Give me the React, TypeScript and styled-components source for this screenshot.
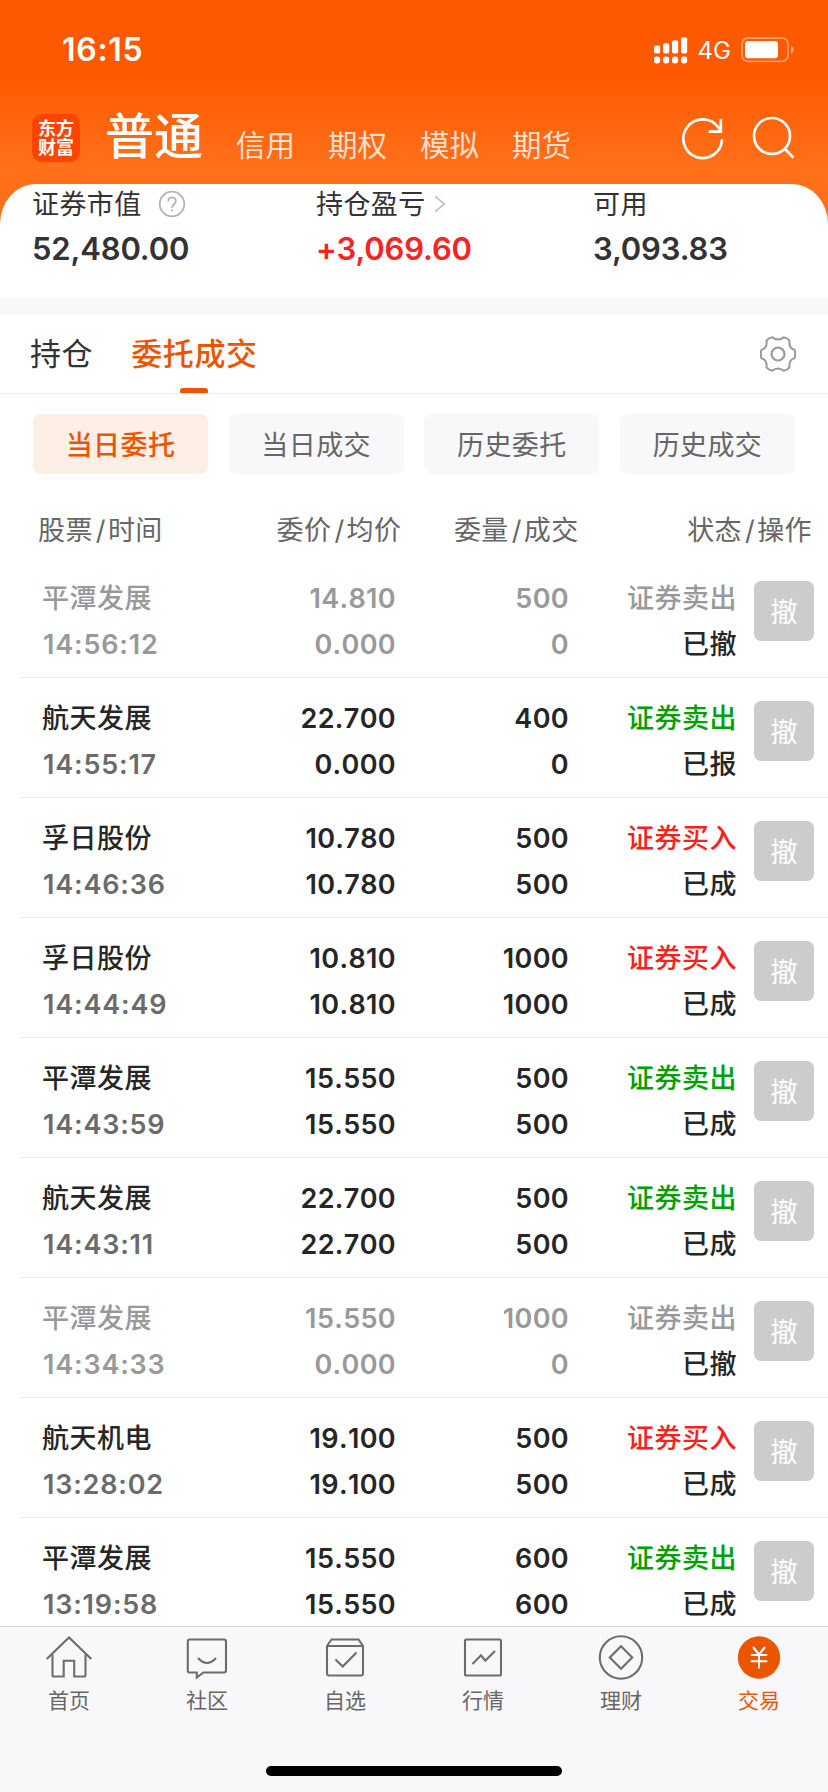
import React from 'react';
import styled, { createGlobalStyle } from 'styled-components';

const GlobalStyle = createGlobalStyle`
  * { box-sizing: border-box; }
  body {
    margin: 0;
    background: #fff;
    font-family: Inter, "Noto Sans CJK SC", sans-serif;
    color: #333;
  }
`;

const Screen = styled.div`
  width: 828px;
  height: 1792px;
  display: flex;
  flex-direction: column;
  overflow: hidden;
  background: linear-gradient(#ff5900 0, #ff5900 75px, #ff7019 165px, #ff7019 230px, #fff 230px);
`;

const StatusBar = styled.div`
  height: 100px;
  flex: none;
  display: flex;
  align-items: center;
  justify-content: space-between;
  padding: 0 34px 0 62px;
  color: #fff;
`;

const Clock = styled.div`
  font-size: 32px;
  line-height: 40px;
  font-weight: 600;
  letter-spacing: 0.7px;
`;

const StatusIcons = styled.div`
  display: flex;
  align-items: center;
`;

const Network = styled.span`
  margin: 0 10px 0 10px;
  font-size: 24px;
  line-height: 30px;
  font-weight: 400;
  padding-top: 2px;
`;

const NavBar = styled.div`
  height: 84px;
  flex: none;
  display: flex;
  padding: 0 33px 0 32px;
  color: #fff;
`;

const Logo = styled.div`
  width: 48px;
  height: 48px;
  margin-top: 14px;
  padding: 5px 0 0;
  border-radius: 10px;
  background: #ff4400;
  font-size: 18px;
  line-height: 19px;
  font-weight: 700;
  text-align: center;
`;

const MainMode = styled.div`
  margin: 7px 0 0 25px;
  font-size: 49px;
  line-height: 60px;
  font-weight: 500;
  width: 105px;
`;

const Mode = styled.div`
  width: 92px;
  margin-top: 25px;
  font-size: 29.5px;
  line-height: 40px;
  color: #ffdfcf;
`;

const ModeList = styled.div`
  display: flex;
  padding-left: 26px;
`;

const NavActions = styled.div`
  margin-left: auto;
  display: flex;
  gap: 28px;
  padding-top: 16px;
`;

const Summary = styled.section`
  height: 114px;
  flex: none;
  display: grid;
  grid-template-columns: 284px 277px 1fr;
  padding-left: 32px;
  background: #fff;
  border-radius: 36px 36px 0 0 / 40px 40px 0 0;
`;

const SummaryLabel = styled.div`
  display: flex;
  align-items: center;
  height: 40px;
  font-size: 27px;
  line-height: 42px;
  letter-spacing: 0.4px;
  span { height: 40px; }
  svg { margin-left: 16px; }
`;

const Amount = styled.div<{ $gain?: boolean }>`
  font-size: 31px;
  line-height: 50px;
  font-weight: 600;
  letter-spacing: -0.15px;
  color: ${p => (p.$gain ? '#fa2323' : '#333')};
`;

const Divider = styled.div`
  height: 16px;
  flex: none;
  background: #f7f8fa;
`;

const TabBar = styled.div`
  height: 80px;
  flex: none;
  display: flex;
  background: #fff;
  border-bottom: 1px solid #ebebeb;
  padding: 0 31px 0 30px;
`;

const Tab = styled.div<{ $active?: boolean }>`
  display: flex;
  flex-direction: column;
  align-items: center;
  justify-content: space-between;
  margin-right: 38px;
  font-size: 31px;
  letter-spacing: 0.6px;
  line-height: 80px;
  font-weight: ${p => (p.$active ? 500 : 400)};
  color: ${p => (p.$active ? '#eb5500' : '#333')};
  height: 79px;
  span { height: 74px; }
`;

const Indicator = styled.i`
  width: 28px;
  height: 5px;
  border-radius: 3px 3px 1px 1px;
  background: #eb5500;
`;

const Settings = styled.div`
  margin: 22px 1px 0 auto;
`;

const Filters = styled.div`
  flex: none;
  display: flex;
  justify-content: space-between;
  padding: 20px 33px 0;
  background: #fff;
`;

const Filter = styled.div<{ $active?: boolean }>`
  width: 175px;
  height: 60px;
  border-radius: 8px;
  text-align: center;
  font-size: 27px;
  letter-spacing: 0.4px;
  line-height: 63px;
  font-weight: ${p => (p.$active ? 500 : 400)};
  color: ${p => (p.$active ? '#eb5500' : '#666')};
  background: ${p => (p.$active ? '#fdeee6' : '#f8f8fa')};
`;

const TableHead = styled.div`
  height: 84px;
  flex: none;
  display: flex;
  justify-content: space-between;
  padding: 37px 16px 0 38px;
  background: #fff;
  color: #666;
  font-size: 27px;
  line-height: 40px;
  letter-spacing: 0.4px;
`;

const HeadCell = styled.div<{ $w: number; $end?: boolean }>`
  width: ${p => p.$w}px;
  text-align: ${p => (p.$end ? 'right' : 'left')};
  white-space: nowrap;
`;

const Slash = styled.span`
  margin: 0 2px 0 3px;
`;

const Orders = styled.div`
  flex: 1;
  min-height: 0;
  overflow: hidden;
  background: #fff;
`;

const Row = styled.div<{ $muted: boolean }>`
  height: 120px;
  margin-left: 20px;
  padding: 18px 0 0 22px;
  display: grid;
  grid-template-columns: 164px 190px 173px 168px 77px;
  border-bottom: 1px solid #ebebeb;
  color: ${p => (p.$muted ? '#999' : '#262626')};
  font-size: 27px;
  line-height: 46px;
  font-weight: 500;
`;

const Cell = styled.div`
  text-align: right;
  font-weight: 600;
  letter-spacing: 0.35px;
  font-kerning: none;
`;

const NameCell = styled.div`
  letter-spacing: 0.5px;
  white-space: nowrap;
`;

const Time = styled.div<{ $muted: boolean }>`
  padding-left: 1px;
  font-weight: 600;
  letter-spacing: 0.8px;
  font-kerning: none;
  color: ${p => (p.$muted ? '#999' : '#6b6b6b')};
`;

const Side = styled.div<{ $color: string }>`
  color: ${p => p.$color};
`;

const StatusCell = styled.div`
  text-align: right;
  letter-spacing: 0.5px;
`;

const State = styled.div`
  color: #262626;
`;

const CancelButton = styled.button`
  width: 60px;
  height: 60px;
  margin: 5px 0 0 17px;
  padding: 0;
  border: 0;
  border-radius: 7px;
  background: #ccc;
  color: #fff;
  font: 400 27px/60px Inter, "Noto Sans CJK SC", sans-serif;
  span { display: block; padding-top: 2px; }
`;

const BottomBar = styled.nav`
  height: 166px;
  flex: none;
  display: flex;
  flex-direction: column;
  align-items: center;
  background: #f8f8fb;
  border-top: 1px solid #d4d4de;
`;

const NavItems = styled.div`
  display: flex;
  width: 100%;
  height: 139px;
`;

const NavItem = styled.div<{ $active?: boolean }>`
  width: 138px;
  display: flex;
  flex-direction: column;
  align-items: center;
  padding-top: 7px;
  font-size: 21px;
  line-height: 28px;
  color: ${p => (p.$active ? '#eb5500' : '#666')};
  span { margin-top: 5px; }
`;

const HomeIndicator = styled.div`
  width: 296px;
  height: 10px;
  border-radius: 5px;
  background: #000;
`;

const SignalIcon = () => (
  <svg width="34" height="27" viewBox="0 0 34 27" fill="#fff">
    <rect x="0" y="8.5" width="6.2" height="8" rx="2" />
    <rect x="9" y="6.2" width="6.2" height="10.3" rx="2" />
    <rect x="18" y="3.2" width="6.2" height="13.3" rx="2" />
    <rect x="27" y="0.2" width="6.2" height="16.3" rx="2" />
    {[0, 9, 18, 27].map(x => <rect key={x} x={x} y="19.5" width="6.2" height="7" rx="2.4" />)}
  </svg>
);

const BatteryIcon = () => (
  <svg width="53" height="26" viewBox="0 0 53 26">
    <rect x="1" y="1" width="46" height="23.4" rx="6" fill="none" stroke="#fff" strokeOpacity="0.42" strokeWidth="1.8" />
    <rect x="4" y="4" width="33" height="17.2" rx="3" fill="#fff" />
    <path d="M50 8.5c3.4 1.6 3.4 6.8 0 8.4z" fill="#fff" fillOpacity="0.45" />
  </svg>
);

const RefreshIcon = () => (
  <svg width="42" height="46" viewBox="0 0 42 46" fill="none" stroke="#fff" strokeWidth="2.7">
    <path d="M40 23.2A19.3 19.3 0 1 1 36.6 11.8L38.5 14.5" />
    <path d="M38.8 3.2V15.7H26.6" />
  </svg>
);

const SearchIcon = () => (
  <svg width="43" height="46" viewBox="0 0 43 46" fill="none" stroke="#fff" strokeWidth="2.7">
    <circle cx="20" cy="20" r="18" />
    <path d="M32.5 32.5L41.4 41.6" />
  </svg>
);

const HelpIcon = () => (
  <svg width="28" height="28" viewBox="0 0 28 28" fill="none" stroke="#b3b3b3" strokeWidth="1.8">
    <circle cx="14" cy="14" r="12.3" />
    <path d="M10.3 11.5c0-5.4 7.6-5.2 7.6-.5 0 3.1-3.8 3-3.8 6.9M14.1 19.3v2.2" />
  </svg>
);

const Chevron = styled.svg`
  && { margin-left: 8px; }
`;

const ChevronIcon = () => (
  <Chevron width="12" height="18" viewBox="0 0 12 18" fill="none" stroke="#c4c4c4" strokeWidth="1.8">
    <path d="M1.2 1.2L10.2 9L1.2 16.8" />
  </Chevron>
);

const GearIcon = () => (
  <svg width="36" height="36" viewBox="0 0 36 36" fill="none" stroke="#999" strokeWidth="2" strokeLinejoin="round">
    <path d="M12.4 1.2C14.2 2.9 16 3.5 18 3.5S21.800 2.900 23.600 1.200Q27.600 2 29.500 4.600C28.800 9.600 31 12.900 34.700 13.900Q35.700 18 34.700 22.100C31 23.100 28.800 26.400 29.500 31.400Q27.600 34 23.600 34.800C21.800 33.100 20 32.500 18 32.500S14.200 33.100 12.400 34.800Q8.400 34 6.500 31.400C7.200 26.400 5 23.100 1.300 22.100Q.3 18 1.300 13.900C5 12.900 7.200 9.600 6.500 4.600Q8.400 2 12.400 1.200Z" />
    <circle cx="18" cy="18" r="6.5" strokeWidth="2.2" />
  </svg>
);

const tabIcons: Record<string, React.ReactNode> = {
  home: (
    <>
      <path d="M1.7 25L24 3.5L46.3 25" />
      <path d="M7.5 20.5V41Q7.5 42.5 9 42.5H18.7V26.7H29.2V42.5H39Q40.5 42.5 40.5 41V20.5" />
    </>
  ),
  community: (
    <>
      <path d="M6.5 5.5H41Q43 5.5 43 7.5V36.5Q43 38.5 41 38.5H20.5L13.8 43.5V38.5H6.5Q4.8 38.5 4.8 36.5V7.5Q4.8 5.5 6.5 5.5Z" />
      <path d="M15 24Q24 34 33 24" />
    </>
  ),
  watch: (
    <>
      <path d="M6 12L10.5 5.5H37.5L42 12V39.5Q42 41.5 40 41.5H8Q6 41.5 6 39.5ZM6 12H42" />
      <path d="M14.5 25.5L21.7 32.5L35.5 18.5" />
    </>
  ),
  market: (
    <>
      <rect x="6" y="5.5" width="36" height="36" rx="1.5" />
      <path d="M13.5 30L22 21.3L26.3 26.7L36 17" />
    </>
  ),
  wealth: (
    <>
      <circle cx="24" cy="23.5" r="21.2" />
      <path d="M24 12.3L35.2 23.5L24 34.7L12.8 23.5Z" />
    </>
  ),
  trade: (
    <>
      <circle cx="24" cy="23.5" r="21.2" fill="#eb5500" stroke="none" />
      <path d="M18 13L24 20.5L30 13M24 20.5V34.5M15.8 21H32.2M15.8 27.3H32.2" stroke="#fff" />
    </>
  ),
};

const TabIcon = ({ name }: { name: string }) => (
  <svg width="48" height="48" viewBox="0 0 48 48" fill="none" stroke="#6c6c6c" strokeWidth="2.1">
    {tabIcons[name]}
  </svg>
);

type Order = [string, string, string, string, string, string, string, string];

const orders: Order[] = [
  ['平潭发展', '14:56:12', '14.810', '0.000', '500', '0', '证券卖出', '已撤'],
  ['航天发展', '14:55:17', '22.700', '0.000', '400', '0', '证券卖出', '已报'],
  ['孚日股份', '14:46:36', '10.780', '10.780', '500', '500', '证券买入', '已成'],
  ['孚日股份', '14:44:49', '10.810', '10.810', '1000', '1000', '证券买入', '已成'],
  ['平潭发展', '14:43:59', '15.550', '15.550', '500', '500', '证券卖出', '已成'],
  ['航天发展', '14:43:11', '22.700', '22.700', '500', '500', '证券卖出', '已成'],
  ['平潭发展', '14:34:33', '15.550', '0.000', '1000', '0', '证券卖出', '已撤'],
  ['航天机电', '13:28:02', '19.100', '19.100', '500', '500', '证券买入', '已成'],
  ['平潭发展', '13:19:58', '15.550', '15.550', '600', '600', '证券卖出', '已成'],
];

const navItems = [
  ['home', '首页'],
  ['community', '社区'],
  ['watch', '自选'],
  ['market', '行情'],
  ['wealth', '理财'],
  ['trade', '交易'],
];

const OrderRow = ({ order }: { order: Order }) => {
  const [name, time, price, avg, qty, filled, side, state] = order;
  const muted = state === '已撤';
  const sideColor = muted ? '#999' : side === '证券买入' ? '#fa2020' : '#00a000';
  return (
    <Row $muted={muted}>
      <NameCell>
        <div>{name}</div>
        <Time $muted={muted}>{time}</Time>
      </NameCell>
      <Cell><div>{price}</div><div>{avg}</div></Cell>
      <Cell><div>{qty}</div><div>{filled}</div></Cell>
      <StatusCell>
        <Side $color={sideColor}>{side}</Side>
        <State>{state}</State>
      </StatusCell>
      <CancelButton><span>撤</span></CancelButton>
    </Row>
  );
};

export default function App() {
  return (
    <Screen>
      <GlobalStyle />
      <StatusBar>
        <Clock>16:15</Clock>
        <StatusIcons>
          <SignalIcon />
          <Network>4G</Network>
          <BatteryIcon />
        </StatusIcons>
      </StatusBar>
      <NavBar>
        <Logo>东方<br />财富</Logo>
        <MainMode>普通</MainMode>
        <ModeList>
          {['信用', '期权', '模拟', '期货'].map(m => <Mode key={m}>{m}</Mode>)}
        </ModeList>
        <NavActions>
          <RefreshIcon />
          <SearchIcon />
        </NavActions>
      </NavBar>
      <Summary>
        <div>
          <SummaryLabel><span>证券市值</span><HelpIcon /></SummaryLabel>
          <Amount>52,480.00</Amount>
        </div>
        <div>
          <SummaryLabel><span>持仓盈亏</span><ChevronIcon /></SummaryLabel>
          <Amount $gain>+3,069.60</Amount>
        </div>
        <div>
          <SummaryLabel><span>可用</span></SummaryLabel>
          <Amount>3,093.83</Amount>
        </div>
      </Summary>
      <Divider />
      <TabBar>
        <Tab><span>持仓</span></Tab>
        <Tab $active><span>委托成交</span><Indicator /></Tab>
        <Settings><GearIcon /></Settings>
      </TabBar>
      <Filters>
        <Filter $active>当日委托</Filter>
        <Filter>当日成交</Filter>
        <Filter>历史委托</Filter>
        <Filter>历史成交</Filter>
      </Filters>
      <TableHead>
        <HeadCell $w={185}>股票<Slash>/</Slash>时间</HeadCell>
        <HeadCell $w={178} $end>委价<Slash>/</Slash>均价</HeadCell>
        <HeadCell $w={177} $end>委量<Slash>/</Slash>成交</HeadCell>
        <HeadCell $w={233} $end>状态<Slash>/</Slash>操作</HeadCell>
      </TableHead>
      <Orders>
        {orders.map(o => <OrderRow key={o[1]} order={o} />)}
      </Orders>
      <BottomBar>
        <NavItems>
          {navItems.map(([icon, label]) => (
            <NavItem key={icon} $active={icon === 'trade'}>
              <TabIcon name={icon} />
              <span>{label}</span>
            </NavItem>
          ))}
        </NavItems>
        <HomeIndicator />
      </BottomBar>
    </Screen>
  );
}
